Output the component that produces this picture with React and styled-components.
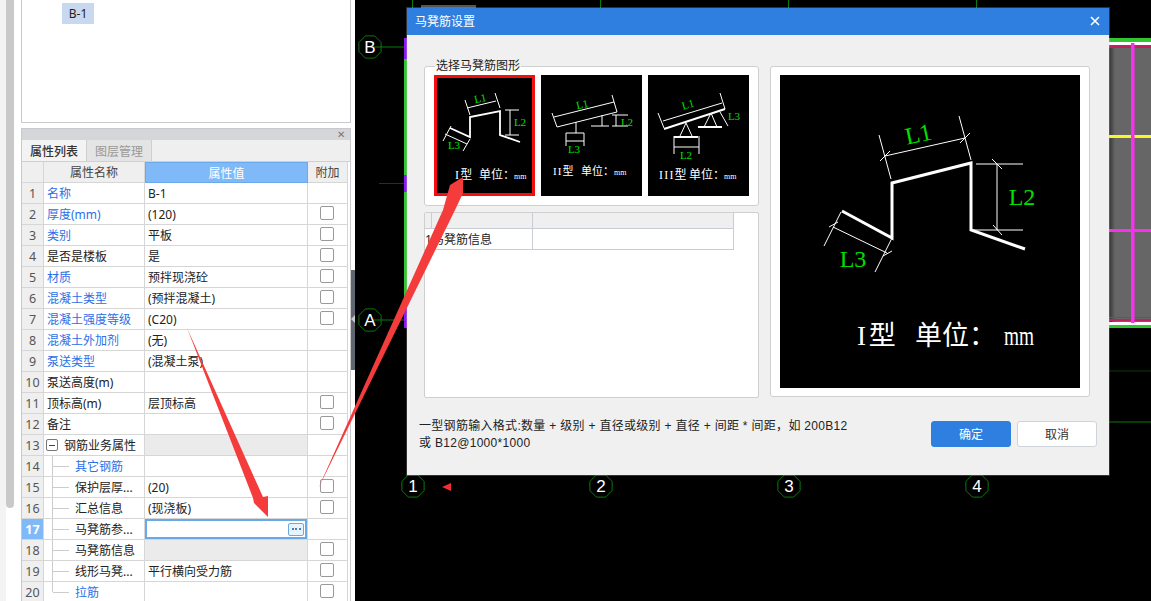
import React from "react";
import styled, { createGlobalStyle } from "styled-components";

const Global = createGlobalStyle`
  html, body { margin: 0; padding: 0; background: #000; overflow: hidden; }
  * { box-sizing: border-box; }
  body { font-family: "Noto Sans", "Noto Sans CJK SC", sans-serif; font-size: 12px; }
`;
const cad = `"Liberation Serif", "Noto Sans CJK SC", serif`;

const Page = styled.div`
  position: relative; width: 1151px; height: 601px; overflow: hidden; display: flex; background: #000;
`;
const Sidebar = styled.aside`
  position: relative; width: 355px; height: 601px; background: #fff; flex: none;
  display: flex; overflow: hidden;
`;
const Rail = styled.div`
  width: 21px; flex: none; background: linear-gradient(90deg, #f3f3f3 0 6px, #fff 6px); padding-left: 6px;
`;
const RailThumb = styled.div`
  width: 8px; height: 508px; background: #c9c9c9; border-radius: 0 0 4px 4px;
`;
const PanelColumn = styled.div`
  width: 330px; flex: none; display: flex; flex-direction: column; gap: 5px;
`;
const TreePanel = styled.div`
  height: 123px; flex: none; background: #fff; border: 1px solid #c8c9cd; border-top: 0; padding: 3px 0 0 40px;
`;
const TreeTag = styled.span`
  display: inline-flex; align-items: center; justify-content: center; width: 32px; height: 21px;
  background: #c8d9ef; color: #222; font-size: 12px;
`;
const PropPanel = styled.div`
  flex: 1; min-height: 0; border: 1px solid #c8c9cd; border-bottom: 0; background: #fff; overflow: hidden;
`;
const PanelStrip = styled.div`
  height: 11px; background: #d5d6da; display: flex; justify-content: flex-end; align-items: center; padding-right: 5px;
  color: #777; font-size: 10px; line-height: 11px;
`;
const Tabs = styled.div`
  height: 22px; display: flex; background: #efefef; border-bottom: 1px solid #d0d0d0;
`;
const Tab = styled.div`
  width: 65px; display: flex; align-items: center; justify-content: center; font-size: 12px;
  font-weight: ${p => (p.$active ? 500 : 400)};
  color: ${p => (p.$active ? "#333" : "#999")};
  background: ${p => (p.$active ? "#f3f3f3" : "#e4e4e4")};
  border-right: 1px solid #cfcfcf;
`;
const Row = styled.div`
  display: grid; grid-template-columns: 22px 101px 163px 40px; height: 21px;
`;
const Cell = styled.div`
  position: relative; display: flex; align-items: center; min-width: 0; white-space: nowrap; overflow: hidden;
  border-right: 1px solid #d6d6d6; border-bottom: 1px solid #d6d6d6; color: #222; font-size: 12px;
`;
const IndexCell = styled(Cell)`
  justify-content: center; font-size: 12.5px; color: ${p => (p.$active ? "#fff" : "#555")};
  font-weight: ${p => (p.$active ? 700 : 400)};
  background: ${p => (p.$active ? "#7fb9f8" : "#efefef")};
`;
const NameCell = styled(Cell)`
  padding-left: ${p => (p.$indent ? 31 : p.$group ? 20 : 3)}px;
  color: ${p => (p.$link ? "#2c6fe6" : "#222")};
`;
const ValueCell = styled(Cell)`
  padding-left: 3px; background: ${p => (p.$muted ? "#ebebeb" : "#fff")};
`;
const ExtraCell = styled(Cell)`
  justify-content: center; padding: 0 2px 3px 0;
`;
const HeadCell = styled(Cell)`
  justify-content: center; background: ${p => (p.$active ? "#7fb9f8" : "#efefef")};
  color: ${p => (p.$active ? "#fff" : "#444")};
  ${p => p.$active && "border: 1px solid #6aa9ee;"}
`;
const Check = styled.span`
  width: 14px; height: 14px; border: 1px solid #999; border-radius: 2px; background: #fff; display: block;
`;
const TreeV = styled.i`
  position: absolute; left: 8px; top: 0; bottom: ${p => (p.$end ? "10px" : "0")}; width: 1px; background: #ccc;
`;
const TreeH = styled.i`
  position: absolute; left: 9px; top: 10px; width: 16px; height: 1px; background: #ccc;
`;
const Expander = styled.span`
  position: absolute; left: 2px; top: 4px; width: 12px; height: 12px; border: 1px solid #777; border-radius: 2px;
  display: flex; align-items: center; justify-content: center;
  &::after { content: ""; width: 6px; height: 1px; background: #444; }
`;
const EditBox = styled.div`
  position: absolute; inset: 0; border: 2px solid #6aa9e8; display: flex; align-items: center; justify-content: flex-end; padding-right: 1px; background: #fff;
`;
const MoreBtn = styled.span`
  width: 16px; height: 13px; border: 1px solid #6aa9e8; border-radius: 2px; background: #e9f3fd; color: #3f7fc4;
  display: flex; align-items: center; justify-content: center; gap: 1.5px;
  &::before, &::after, & > b { content: ""; width: 2px; height: 2px; background: #3f7fc4; display: block; }
`;
const DividerThumb = styled.div`
  position: absolute; right: 0; top: 270px; width: 4px; height: 100px; background: #5f6670;
`;
const DividerArrow = styled.div`
  position: absolute; right: 0; top: 315px; width: 0; height: 0;
  border: 4px solid transparent; border-right: 4px solid #c6c9ce; border-left: 0;
`;
const Canvas = styled.main`
  position: relative; flex: 1; background: #000; overflow: hidden;
`;
const CadSvg = styled.svg`
  display: block; width: 796px; height: 601px;
`;
const Dialog = styled.section`
  position: absolute; left: 407px; top: 8px; width: 702px; height: 467px; background: #f0f0f0;
  display: flex; flex-direction: column; box-shadow: 0 0 0 1px rgba(200,200,200,.25);
`;
const TitleBar = styled.header`
  height: 27px; flex: none; background: #2e7fe0; color: #fff; display: flex; align-items: center;
  justify-content: space-between; padding: 0 9px 2px 8px; font-size: 12px;
`;
const Body = styled.div`
  flex: none; display: flex; gap: 11px; padding: 31px 0 0 17px;
`;
const LeftCol = styled.div`
  width: 335px; display: flex; flex-direction: column; gap: 6px;
`;
const Group = styled.div`
  position: relative; height: 140px; background: #fff; border: 1px solid #cfcfcf; border-radius: 3px;
  display: flex; gap: 6px; padding: 8px 0 0 9px;
`;
const GroupTitle = styled.span`
  position: absolute; left: 10px; top: -9px; padding: 0 1px; font-size: 12px; line-height: 16px; color: #222;
  background: linear-gradient(#f0f0f0 0 9px, #fff 9px);
`;
const Thumb = styled.button`
  width: 101px; height: 121px; padding: 0; background: #000; cursor: pointer; display: block;
  border: ${p => (p.$selected ? "3px solid #f10f0f" : "0")};
`;
const ThumbSvg = styled.svg`
  display: block; width: 100%; height: 100%;
`;
const InfoTable = styled.div`
  height: 186px; background: #fff; border: 1px solid #cfcfcf; border-radius: 2px;
`;
const InfoRow = styled.div`
  display: grid; grid-template-columns: 7px 101px 201px; width: 309px; height: ${p => (p.$head ? 16 : 21)}px;
`;
const InfoCell = styled.div`
  display: flex; align-items: center; font-size: 12px; color: #222; white-space: nowrap;
  background: ${p => (p.$head ? "#efefef" : "#fff")};
  border-right: 1px solid ${p => (p.$open ? "transparent" : "#c8ccd4")}; border-bottom: 1px solid #c8ccd4;
`;
const Preview = styled.div`
  width: 320px; height: 331px; background: #fff; border: 1px solid #cfcfcf; border-radius: 3px; padding: 8px 0 0 9px;
`;
const PreviewSvg = styled.svg`
  display: block; width: 300px; height: 313px; background: #000;
`;
const Footer = styled.footer`
  flex: 1; display: flex; justify-content: space-between; padding: 23px 12px 0 12px;
`;
const Hint = styled.p`
  margin: -3px 0 0; width: 436px; font-size: 12px; line-height: 17px; color: #222; letter-spacing: .3px;
  font-family: "Liberation Sans", "Noto Sans CJK SC", sans-serif;
`;
const Buttons = styled.div`
  display: flex; gap: 6px;
`;
const Btn = styled.button`
  width: 80px; height: 26px; border-radius: 3px; font-size: 12px; padding: 0; font-family: inherit;
  color: ${p => (p.$primary ? "#fff" : "#333")};
  background: ${p => (p.$primary ? "#2e7fe0" : "#fff")};
  border: 1px solid ${p => (p.$primary ? "#2e7fe0" : "#cfd3da")};
`;
const ArrowLayer = styled.svg`
  position: absolute; left: 0; top: 0; width: 1151px; height: 601px; pointer-events: none;
`;

const rows = [
  { n: 1, name: "名称", val: "B-1", link: 1 },
  { n: 2, name: "厚度(mm)", val: "(120)", link: 1, c: 1 },
  { n: 3, name: "类别", val: "平板", link: 1, c: 1 },
  { n: 4, name: "是否是楼板", val: "是", c: 1 },
  { n: 5, name: "材质", val: "预拌现浇砼", link: 1, c: 1 },
  { n: 6, name: "混凝土类型", val: "(预拌混凝土)", link: 1, c: 1 },
  { n: 7, name: "混凝土强度等级", val: "(C20)", link: 1, c: 1 },
  { n: 8, name: "混凝土外加剂", val: "(无)", link: 1 },
  { n: 9, name: "泵送类型", val: "(混凝土泵)", link: 1 },
  { n: 10, name: "泵送高度(m)", val: "" },
  { n: 11, name: "顶标高(m)", val: "层顶标高", c: 1 },
  { n: 12, name: "备注", val: "", c: 1 },
  { n: 13, name: "钢筋业务属性", val: "", group: 1, muted: 1 },
  { n: 14, name: "其它钢筋", val: "", indent: 1, link: 1 },
  { n: 15, name: "保护层厚...", val: "(20)", indent: 1, c: 1 },
  { n: 16, name: "汇总信息", val: "(现浇板)", indent: 1, c: 1 },
  { n: 17, name: "马凳筋参...", val: "", indent: 1, edit: 1 },
  { n: 18, name: "马凳筋信息", val: "", indent: 1, c: 1, muted: 1 },
  { n: 19, name: "线形马凳...", val: "平行横向受力筋", indent: 1, c: 1 },
  { n: 20, name: "拉筋", val: "", indent: 1, link: 1, c: 1 },
];

const Lines = ({ d, w = 1 }) => <path d={d} stroke="#fff" strokeWidth={w} fill="none" />;
const Label = ({ x, y, s, r, children }) => (
  <text x={x} y={y} fontSize={s} fill="#00e000" fontFamily={cad} textAnchor="middle" transform={r ? `rotate(${r} ${x} ${y})` : undefined}>{children}</text>
);
/* caption pieces are placed one by one: the CAD font has wide gaps between type, unit and mm */
const Caption = ({ y, s, mmS, mmW, type, xs }) => (
  <text y={y} fontSize={s} fill="#fff" fontFamily={cad}>
    <tspan x={xs[0]} letterSpacing={s * 0.1}>{type}</tspan>
    <tspan x={xs[1]}>单位：</tspan>
    {mmW
      ? <tspan x={xs[2]} textLength={mmW} lengthAdjust="spacingAndGlyphs">mm</tspan>
      : <tspan x={xs[2]} fontSize={mmS}>mm</tspan>}
  </text>
);

const Thumb1 = () => (
  <ThumbSvg viewBox="0 0 95 115">
    <g transform="translate(-3 -3)">
      <Lines w={1.8} d="M16 53L36 62V42L66 36V60L86 67" />
      <Lines d="M33 33L62 26M31 25L36 40M61 18L66 33M71 35H85M71 60H85M76 35V60M11 59L33 69M17 51L9 66M36 64L29 76" />
      <Label x={47} y={27} s={11} r={-12}>L1</Label>
      <Label x={86} y={51} s={11}>L2</Label>
      <Label x={20} y={74} s={11}>L3</Label>
      <Caption y={104} s={12} mmS={8} type="I型" xs={[21, 45, 80]} />
    </g>
  </ThumbSvg>
);
const Thumb2 = () => (
  <ThumbSvg viewBox="0 0 101 121">
    <Lines d="M13 42L73 27M16 52L76 37M11 38L16 52M71 20L76 37M35 47V58M25 58H43M25 66H43M25 58V71M43 58V71M61 40V51M50 51H68M71 40H87M71 51H87M75 40V51" />
    <Label x={42} y={33} s={11} r={-12}>L1</Label>
    <Label x={86} y={51} s={11}>L2</Label>
    <Label x={33} y={78} s={11}>L3</Label>
    <Caption y={100} s={11} mmS={8} type="II型" xs={[12, 40, 73]} />
  </ThumbSvg>
);
const Thumb3 = () => (
  <ThumbSvg viewBox="0 0 101 121">
    <Lines w={2} d="M16 54L77 34M26 62H50M50 52H74" />
    <Lines d="M15 46L74 28M10 38L16 53M72 18L77 34M38 48L32 61M38 48L44 61M26 72H51M26 61V79M51 61V79M63 38L56 52M63 38L69 52M72 37L80 51" />
    <Label x={41} y={33} s={11} r={-16}>L1</Label>
    <Label x={38} y={84} s={11}>L2</Label>
    <Label x={86} y={45} s={11}>L3</Label>
    <Caption y={104} s={12} mmS={8} type="III型" xs={[11, 41, 76]} />
  </ThumbSvg>
);

const bubbles = [
  ["B", 370, 47], ["A", 370, 320], ["1", 413, 486], ["2", 601, 486], ["3", 789, 486], ["4", 977, 486],
];
const octagon = (cx, cy, r) =>
  Array.from({ length: 8 }, (_, i) => {
    const a = Math.PI / 8 + (i * Math.PI) / 4;
    return `${(cx + r * Math.cos(a)).toFixed(1)},${(cy + r * Math.sin(a)).toFixed(1)}`;
  }).join(" ");

const CadDrawing = () => (
  <CadSvg viewBox="355 0 796 601">
    <defs>
      <linearGradient id="shade" x1="0" x2="1" y1="0" y2="0">
        <stop offset="0" stopColor="#333" />
        <stop offset="1" stopColor="#666" />
      </linearGradient>
    </defs>
    <path d="M412.5 0V8M600.5 0V8M788.5 0V8M976.5 0V8" stroke="#0a7a0a" />
    <rect x="421" y="5" width="55" height="3" fill="#555" />
    {bubbles.map(([t, x, y]) => (
      <polygon key={t} points={octagon(x, y, 12)} fill="#000" stroke="#0b7a0b" strokeWidth="1" />
    ))}
    <path d="M373 47H405M373 320H405" stroke="#0a7a0a" strokeWidth="1" fill="none" />
    <path d="M379 183.5H405" stroke="#7a0b0b" strokeWidth="1" />
    <rect x="404" y="38" width="3" height="290" fill="#2fc62f" />
    <rect x="404" y="38" width="3" height="21" fill="#8a19f5" />
    <rect x="404" y="175" width="3" height="17" fill="#8a19f5" />
    <rect x="404" y="308" width="3" height="20" fill="#8a19f5" />
    {bubbles.map(([t, x, y]) => (
      <text key={t} x={x} y={y + 6} fontSize="17" fill="#fff" textAnchor="middle" fontFamily='"Liberation Sans", sans-serif'>{t}</text>
    ))}
    <path d="M451 483V491L442 487Z" fill="#f03030" />

    <rect x="1109" y="38" width="42" height="290" fill="#666" />
    <rect x="1109" y="38" width="6" height="290" fill="url(#shade)" />
    <rect x="1109" y="38" width="42" height="4" fill="#2fc62f" />
    <rect x="1109" y="42" width="42" height="3" fill="#fff" />
    <rect x="1109" y="45" width="42" height="1" fill="#4a4ae0" />
    <rect x="1109" y="46" width="42" height="2" fill="#c21f5f" />
    <rect x="1109" y="317" width="42" height="1" fill="#4a4ae0" />
    <rect x="1109" y="319" width="42" height="2" fill="#c21f5f" />
    <rect x="1109" y="322" width="42" height="3" fill="#fff" />
    <rect x="1109" y="325" width="42" height="3" fill="#2fc62f" />
    <rect x="1109" y="135" width="42" height="3" fill="#f7f72a" />
    <rect x="1109" y="229" width="42" height="3" fill="#fb2ff0" />
    <rect x="1131" y="43" width="3.5" height="280" fill="#fb2ff0" />
    <path d="M1109 422H1151" stroke="#0a7a0a" />
    <path d="M1109 371H1151" stroke="#063f06" />
  </CadSvg>
);

export default function App() {
  return (
    <Page>
      <Global />
      <Sidebar>
        <Rail><RailThumb /></Rail>
        <PanelColumn>
          <TreePanel><TreeTag>B-1</TreeTag></TreePanel>
          <PropPanel>
            <PanelStrip>✕</PanelStrip>
            <Tabs>
              <Tab $active>属性列表</Tab>
              <Tab>图层管理</Tab>
            </Tabs>
            <Row>
              <HeadCell />
              <HeadCell>属性名称</HeadCell>
              <HeadCell $active>属性值</HeadCell>
              <HeadCell>附加</HeadCell>
            </Row>
            {rows.map(r => (
              <Row key={r.n}>
                <IndexCell $active={r.edit}>{r.n}</IndexCell>
                <NameCell $link={r.link} $indent={r.indent} $group={r.group}>
                  {r.group && <Expander />}
                  {r.indent && <TreeV $end={r.n === 20 ? 1 : 0} />}
                  {r.indent && <TreeH />}
                  {r.name}
                </NameCell>
                <ValueCell $muted={r.muted}>
                  {r.val}
                  {r.edit && <EditBox><MoreBtn><b /></MoreBtn></EditBox>}
                </ValueCell>
                <ExtraCell>{r.c && <Check />}</ExtraCell>
              </Row>
            ))}
          </PropPanel>
        </PanelColumn>
        <DividerThumb />
        <DividerArrow />
      </Sidebar>
      <Canvas><CadDrawing /></Canvas>

      <Dialog>
        <TitleBar>
          <span>马凳筋设置</span>
          <svg width="10" height="10" viewBox="0 0 10 10"><path d="M1 1L9 9M9 1L1 9" stroke="#fff" strokeWidth="1.6" /></svg>
        </TitleBar>
        <Body>
          <LeftCol>
            <Group>
              <GroupTitle>选择马凳筋图形</GroupTitle>
              <Thumb $selected><Thumb1 /></Thumb>
              <Thumb><Thumb2 /></Thumb>
              <Thumb><Thumb3 /></Thumb>
            </Group>
            <InfoTable>
              <InfoRow $head><InfoCell $head /><InfoCell $head /><InfoCell $head /></InfoRow>
              <InfoRow><InfoCell $open>1</InfoCell><InfoCell>马凳筋信息</InfoCell><InfoCell /></InfoRow>
            </InfoTable>
          </LeftCol>
          <Preview>
            <PreviewSvg viewBox="0 0 300 313">
              <Lines w={3} d="M62 136L112 163V108L191 88V155L245 174" />
              <Lines d="M105 81L185 63M99 60L111 104M179 41L191 85M100 86L110 76M180 68L190 58M196 89H243M192 155H243M217 89V155M212 84L222 94M213 150L222 160M53 152L107 178M61 137L44 171M112 163L95 197M49 152L58 147M103 181L112 176" />
              <Label x={140} y={67} s={24} r={-12}>L1</Label>
              <Label x={242} y={130} s={24}>L2</Label>
              <Label x={73} y={192} s={24}>L3</Label>
              <Caption y={270} s={27} mmW={30} type="I型" xs={[77, 135, 224]} />
            </PreviewSvg>
          </Preview>
        </Body>
        <Footer>
          <Hint>一型钢筋输入格式:数量 + 级别 + 直径或级别 + 直径 + 间距 * 间距，如 200B12 或 B12@1000*1000</Hint>
          <Buttons>
            <Btn $primary>确定</Btn>
            <Btn>取消</Btn>
          </Buttons>
        </Footer>
      </Dialog>

      <ArrowLayer viewBox="0 0 1151 601">
        <polygon points="187,328 263,497 268,496 268,517 254,503 253,498" fill="#f53c3c" />
        <polygon points="318,489 456,208 463,193 463,177 450,185 443,210" fill="#f53c3c" />
      </ArrowLayer>
    </Page>
  );
}
